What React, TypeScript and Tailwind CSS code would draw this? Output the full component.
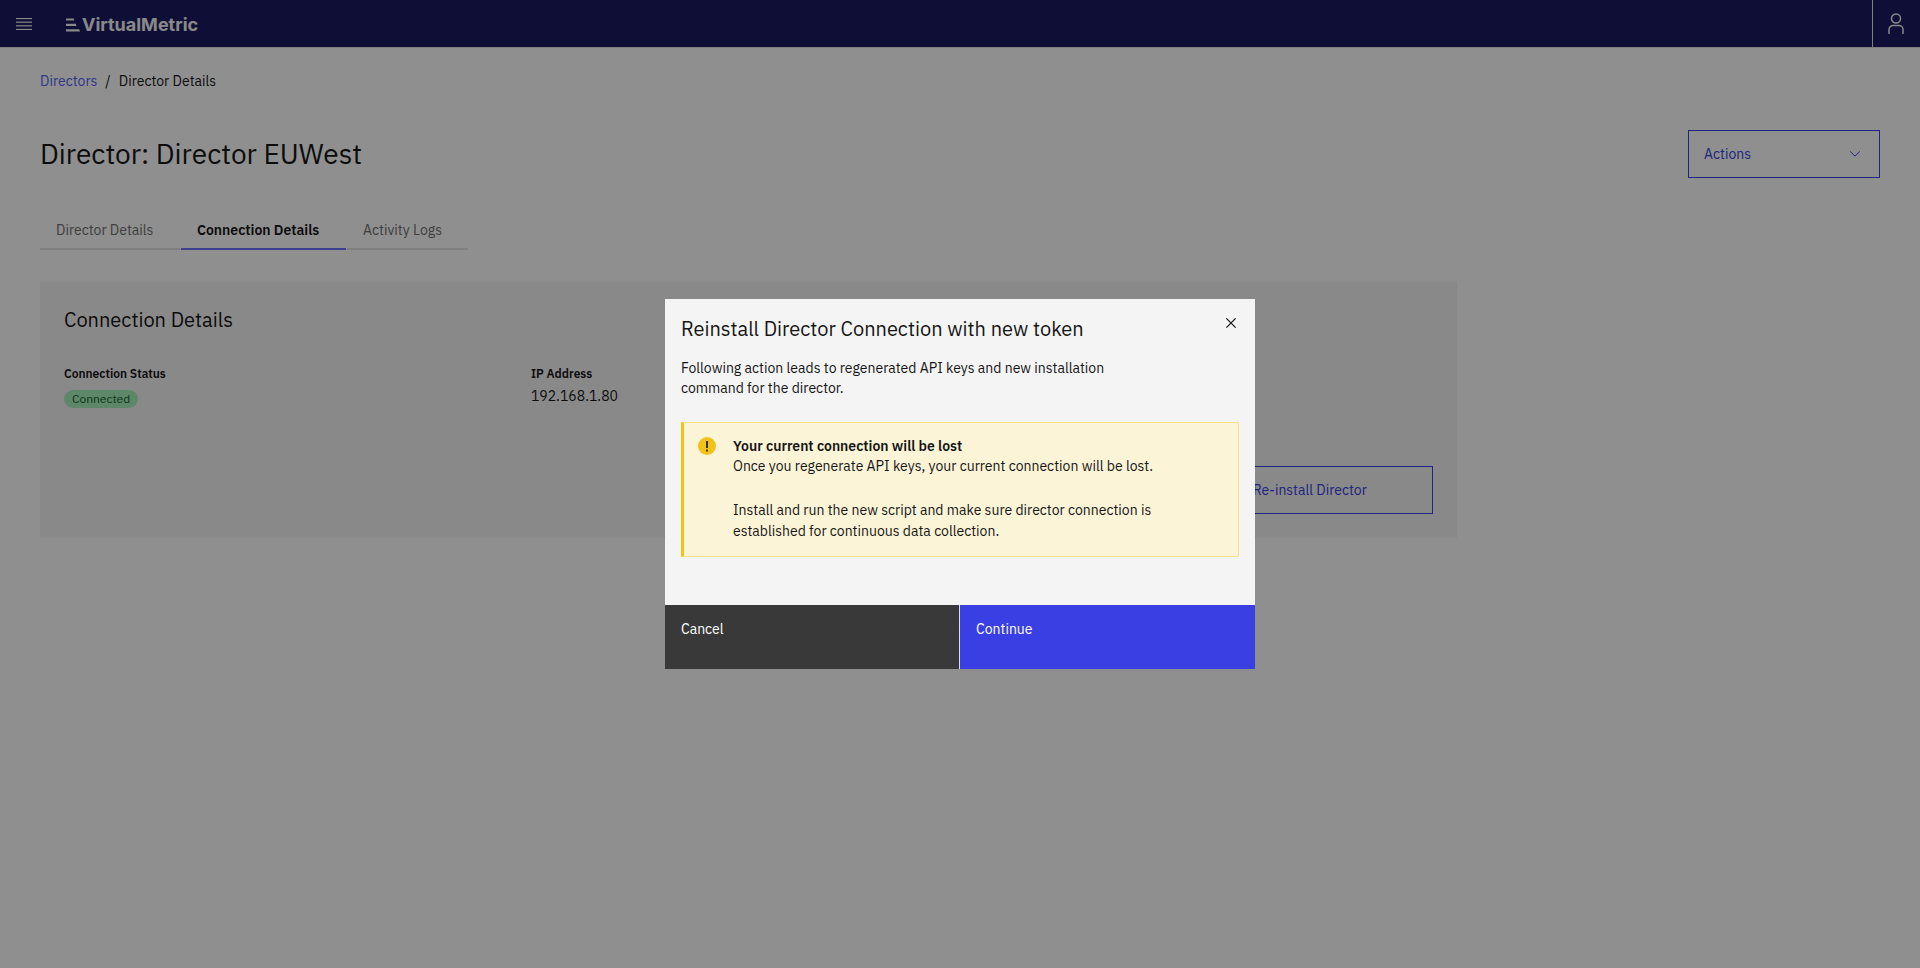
import React from "react";

function MenuIcon() {
  return (
    <svg width="16" height="12" viewBox="0 0 16 12" fill="currentColor" aria-hidden="true">
      <rect x="0" y="0" width="16" height="1.1" />
      <rect x="0" y="3.6" width="16" height="1.2" />
      <rect x="0" y="7.2" width="16" height="1.2" />
      <rect x="0" y="10.9" width="16" height="1.1" />
    </svg>
  );
}

function LogoMark() {
  return (
    <svg width="14" height="14" viewBox="0 0 14 14" fill="currentColor" aria-hidden="true">
      <path d="M0 .4h8v2.2H0zM0 5.8h9.8l.6 2.2H0zM0 11.2h13.2l.8 2.4H0z" />
    </svg>
  );
}

function UserIcon() {
  return (
    <svg width="16" height="22" viewBox="0 0 16 22" fill="none" stroke="currentColor" strokeWidth="1.5" aria-hidden="true">
      <circle cx="8" cy="5.5" r="4.5" />
      <path d="M1 21v-4.5a4 4 0 0 1 4-4h6a4 4 0 0 1 4 4V21" />
    </svg>
  );
}

function ChevronDown() {
  return (
    <svg width="12" height="8" viewBox="0 0 12 8" fill="none" stroke="currentColor" strokeWidth="1" aria-hidden="true">
      <path d="M1.2 1.5 6 6.2l4.8-4.7" />
    </svg>
  );
}

function CloseIcon() {
  return (
    <svg width="12" height="12" viewBox="0 0 12 12" fill="none" stroke="currentColor" strokeWidth="1.25" aria-hidden="true">
      <path d="m1.4 1.4 9.2 9.2M10.6 1.4l-9.2 9.2" />
    </svg>
  );
}

function WarningIcon() {
  return (
    <svg className="mt-px shrink-0" width="18" height="18" viewBox="0 0 18 18" aria-hidden="true">
      <circle cx="9" cy="9" r="9" fill="#f1c21b" />
      <path d="M8 4h2v7H8z" fill="#3a2f02" />
      <path d="M8 12.4h2v2H8z" fill="#4d3f05" />
    </svg>
  );
}

function Header() {
  return (
    <header className="flex h-12 items-stretch border-b border-[#e0e0e0] bg-[#1b1960] text-[#f4f4f4]">
      <button type="button" aria-label="Open menu" className="flex w-12 items-center justify-center">
        <MenuIcon />
      </button>
      <a href="#" className="ml-[18px] flex items-center gap-0.5 pt-0.5 font-['Inter',sans-serif] text-lg font-bold">
        <LogoMark />
        VirtualMetric
      </a>
      <button
        type="button"
        aria-label="User profile"
        className="ml-auto flex w-12 items-center justify-center border-l border-[#e0e0e0] pr-0.5"
      >
        <UserIcon />
      </button>
    </header>
  );
}

const tabs = [
  { label: "Director Details", width: "w-[140px]", active: false },
  { label: "Connection Details", width: "w-[165px]", active: true },
  { label: "Activity Logs", width: "w-[121px]", active: false },
];

function Tabs() {
  return (
    <div role="tablist" className="mt-8 flex gap-px">
      {tabs.map((tab) => (
        <button
          key={tab.label}
          type="button"
          role="tab"
          aria-selected={tab.active}
          className={`${tab.width} h-10 border-b-2 pt-0.5 pl-4 text-left whitespace-nowrap ${
            tab.active ? "border-[#6d73ff] font-semibold text-[#161616]" : "border-[#e0e0e0] text-[#6f6f6f]"
          }`}
        >
          {tab.label}
        </button>
      ))}
    </div>
  );
}

function ConnectionCard() {
  return (
    <section className="mt-8 w-[77%] bg-[#f4f4f4] p-6">
      <h2 className="text-xl leading-7">Connection Details</h2>
      <dl className="mt-8 grid grid-cols-3 gap-8">
        <div>
          <dt className="text-xs leading-4 font-semibold">Connection Status</dt>
          <dd className="mt-2 flex">
            <span className="rounded-full bg-[#a7f0ba] px-2 text-xs leading-[18px] text-[#0e6027]">Connected</span>
          </dd>
        </div>
        <div>
          <dt className="text-xs leading-4 font-semibold">IP Address</dt>
          <dd className="mt-1">192.168.1.80</dd>
        </div>
      </dl>
      <div className="mt-[58px] flex justify-end">
        <button type="button" className="h-12 w-[246px] border border-[#393fe3] text-[#393fe3]">
          Re-install Director
        </button>
      </div>
    </section>
  );
}

function ReinstallDialog() {
  return (
    <div className="fixed inset-0 flex items-center justify-center bg-black/44">
      <div role="dialog" aria-modal="true" aria-labelledby="dialog-title" className="w-[590px] max-w-full bg-[#f4f4f4]">
        <div className="px-4 pt-4 pb-12">
          <div className="flex items-start justify-between">
            <h2 id="dialog-title" className="text-xl leading-7">
              Reinstall Director Connection with new token
            </h2>
            <button type="button" aria-label="Close" className="flex size-4 items-center justify-center">
              <CloseIcon />
            </button>
          </div>
          <p className="mt-[15px] pr-28">
            Following action leads to regenerated API keys and new installation command for the director.
          </p>
          <div
            role="alert"
            className="mt-6 flex gap-[17px] border border-l-3 border-[#f9e08a] border-l-[#f1c21b] bg-[#fcf4d6] pt-[13px] pr-16 pb-3.5 pl-3.5"
          >
            <WarningIcon />
            <div>
              <p className="font-semibold">Your current connection will be lost</p>
              <p>Once you regenerate API keys, your current connection will be lost.</p>
              <p className="mt-6 leading-[21px]">
                Install and run the new script and make sure director connection is established for continuous data
                collection.
              </p>
            </div>
          </div>
        </div>
        <div className="grid grid-cols-2 text-white">
          <button type="button" className="flex h-16 items-start border-r border-[#e0e0e0] bg-[#393939] px-4 pt-3.5">
            Cancel
          </button>
          <button type="button" className="flex h-16 items-start bg-[#393fe3] px-4 pt-3.5">
            Continue
          </button>
        </div>
      </div>
    </div>
  );
}

export default function App() {
  return (
    <div className="min-h-screen bg-white font-['IBM_Plex_Sans','Open_Sans',sans-serif] text-sm leading-5 text-[#161616]">
      <Header />
      <main className="px-10 pt-[23px]">
        <nav aria-label="Breadcrumb" className="flex gap-2">
          <a href="#" className="text-[#5a5ff5]">
            Directors
          </a>
          <span>/</span>
          <span>Director Details</span>
        </nav>
        <div className="mt-[39px] flex items-center justify-between">
          <h1 className="text-[28px] leading-9">Director: Director EUWest</h1>
          <button
            type="button"
            className="flex h-12 w-48 items-center justify-between border border-[#393fe3] pr-[18px] pl-[15px] text-[#393fe3]"
          >
            Actions
            <ChevronDown />
          </button>
        </div>
        <Tabs />
        <ConnectionCard />
      </main>
      <ReinstallDialog />
    </div>
  );
}
